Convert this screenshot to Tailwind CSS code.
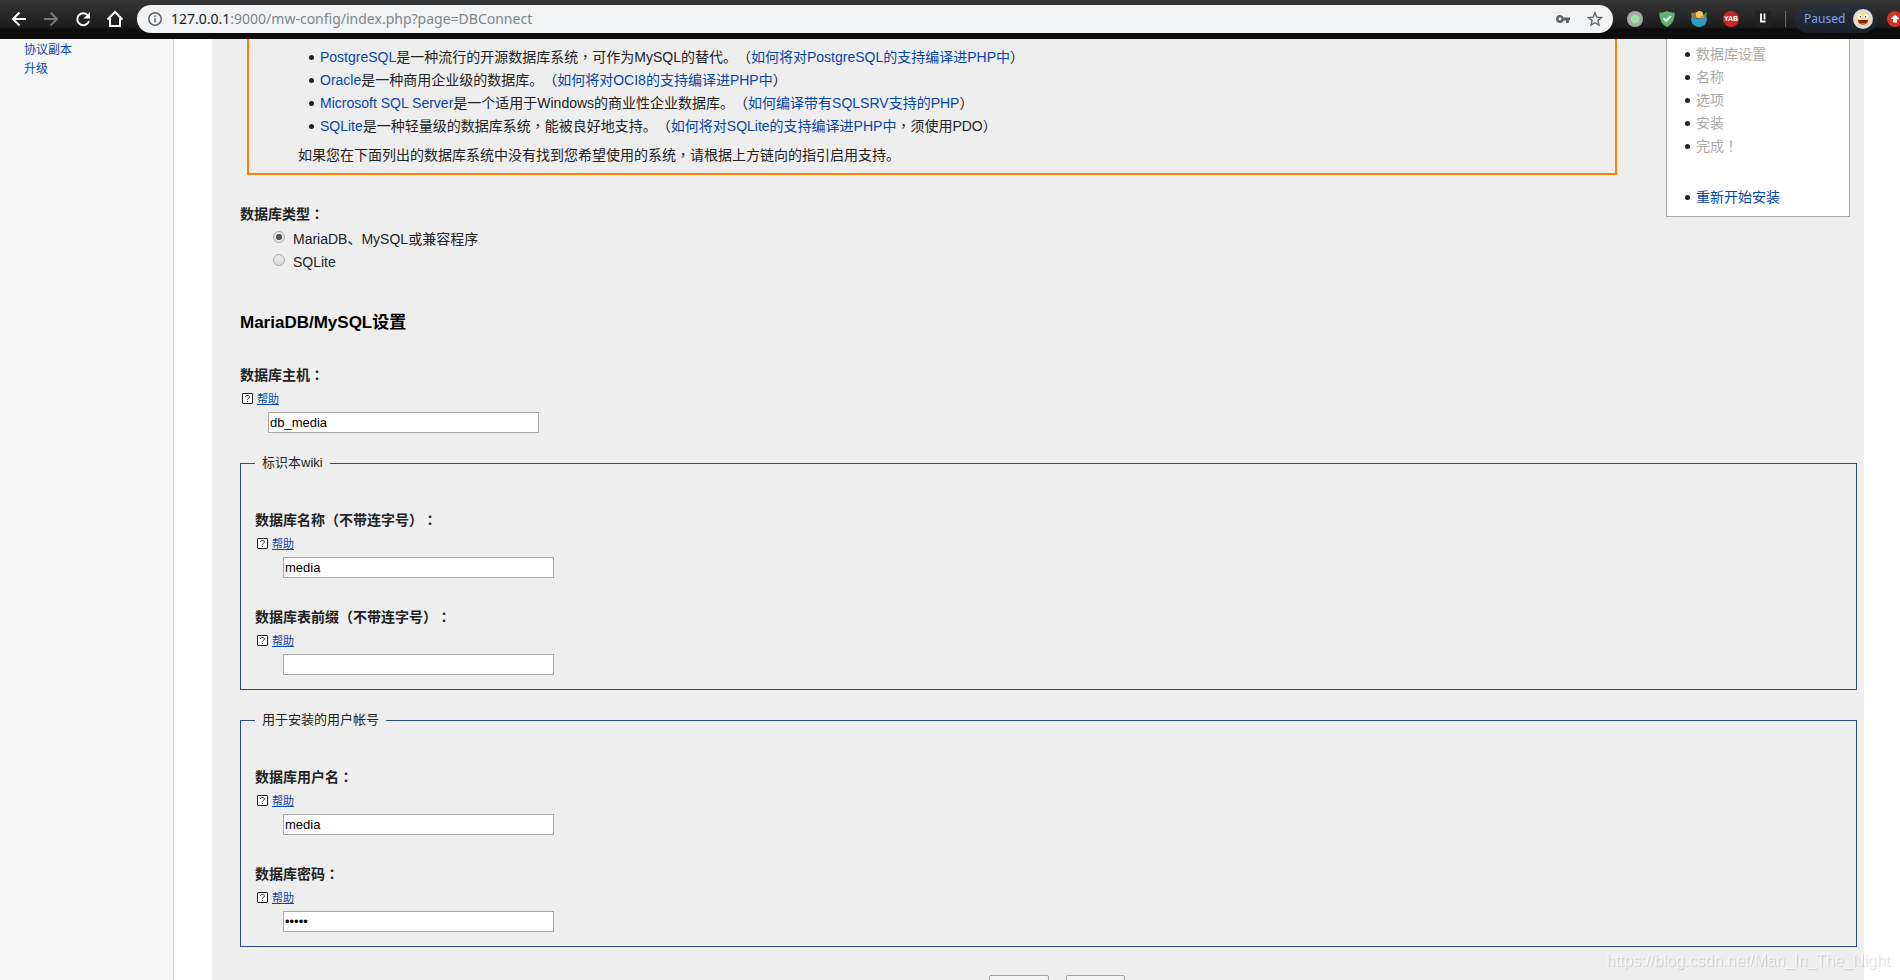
<!DOCTYPE html>
<html lang="zh-CN">
<head>
    <meta charset="UTF-8" />
    <meta name="viewport" content="width=device-width, initial-scale=1.0" />
    <title>MediaWiki 安装</title>
    <script src="https://cdn.jsdelivr.net/npm/@tailwindcss/browser@4"></script>
</head>
<body class="h-screen flex flex-col overflow-hidden bg-white font-['Liberation_Sans','Noto_Sans_CJK_SC',sans-serif] text-sm text-[#222] [text-spacing-trim:space-all]">

    <!-- Browser toolbar -->
    <header class="h-[39px] shrink-0 flex items-center pb-px pl-[9px] bg-linear-to-b from-[#363636] via-[#1c1c1c] via-70% to-[#0c0c0c] to-75% overflow-hidden">
        <nav class="flex items-center gap-3 text-white">
            <button type="button" aria-label="Back" class="size-5">
                <svg viewBox="0 0 20 20" fill="none" stroke="currentColor" stroke-width="2"><path d="M17 10H4M10.500 3.500L4 10l6.500 6.500" /></svg>
            </button>
            <button type="button" aria-label="Forward" class="size-5 text-[#777]">
                <svg viewBox="0 0 20 20" fill="none" stroke="currentColor" stroke-width="2"><path d="M3 10h13M9.500 3.500L16 10l-6.500 6.500" /></svg>
            </button>
            <button type="button" aria-label="Reload" class="size-5">
                <svg viewBox="0 0 20 20" fill="none" stroke="currentColor" stroke-width="2"><path d="M15 6.500A6 6 0 1 0 16 12" /><path d="M17 3v6.500h-6.500z" fill="currentColor" stroke="none" /></svg>
            </button>
            <button type="button" aria-label="Home" class="size-5">
                <svg viewBox="0 0 20 20" fill="none" stroke="currentColor" stroke-width="2"><path d="M2.500 10.500L10 3l7.500 7.500M5 9v8h10V9" /></svg>
            </button>
        </nav>

        <div class="ml-3 flex-1 h-7 flex items-center rounded-full bg-[#f1f3f4] pl-[11px] pr-[10px] text-[#5f6368]">
            <svg class="size-[14px]" viewBox="0 0 14 14" fill="none" stroke="currentColor" stroke-width="1.500"><circle cx="7" cy="7" r="6.200" /><path d="M7 6.200v4M7 3.500v1.600" /></svg>
            <div class="ml-[9px] flex-1 font-['Noto_Sans',sans-serif] text-sm text-[#80868b]"><span class="text-[#202124]">127.0.0.1</span>:9000/mw-config/index.php?page=DBConnect</div>
            <svg class="w-[14px] h-2 mr-[17px]" viewBox="0 0 14 8" fill="currentColor"><path fill-rule="evenodd" d="M4 0a4 4 0 0 1 3.700 2.600H14v2.800h-1.200V8H10V5.400H7.700A4 4 0 1 1 4 0zm0 2.600a1.400 1.400 0 1 0 0 2.800 1.400 1.400 0 0 0 0-2.800z" /></svg>
            <svg class="size-4" viewBox="0 0 16 16" fill="none" stroke="currentColor" stroke-width="1.400"><path d="M8 1.800l1.800 4.300 4.700.4-3.600 3.100 1.100 4.500L8 11.700l-4 2.400 1.100-4.500-3.600-3.100 4.700-.4z" /></svg>
        </div>

        <!-- Extensions -->
        <div class="ml-[14px] flex items-center gap-4">
            <svg class="size-4" viewBox="0 0 16 16"><circle cx="8" cy="8" r="8" fill="#a9a9a9" /><circle cx="8" cy="8" r="4.300" fill="#9be29b" /></svg>
            <svg class="size-4" viewBox="0 0 16 16"><path d="M8 0c2 1.300 5 1.500 7.700 1.500C15.800 9 13 13.500 8 16 3 13.500.2 9 .3 1.500 3 1.500 6 1.300 8 0z" fill="#5cb270" /><path d="M4.500 7.300l2.700 2.600L11.800 5" fill="none" stroke="#fff" stroke-width="1.800" /></svg>
            <svg class="size-4" viewBox="0 0 16 16"><path d="M0 1.500l4 1v5H1z" fill="#3ba55c" /><path d="M16 1l-4 3v4h3z" fill="#2f9e4f" /><path d="M2 2l4-1 1 6-4 .5z" fill="#d94f5c" /><circle cx="8.500" cy="3.700" r="3.700" fill="#f6c244" /><circle cx="8" cy="3.500" r="1" fill="#fbe29a" /><path d="M10 5l3-1 1 4-4-.5z" fill="#f08a2c" /><path d="M0 6.500c5 1.500 11 1.500 16 0 0 6-3 9.500-8 9.500S0 12.500 0 6.500z" fill="#2d9cbc" /></svg>
            <span class="size-4 rounded-full bg-[#c62828] text-white text-[7px] leading-4 font-bold text-center">YAB</span>
            <svg class="size-4" viewBox="0 0 16 16"><path d="M0 0h16v16H0z" fill="#222" /><path d="M6 2.500v8h4.500M9.500 2.500v6" fill="none" stroke="#fff" stroke-width="1.800" /></svg>
        </div>
        <div class="ml-[14px] w-px h-4 bg-[#666]"></div>
        <button type="button" class="ml-2 h-7 w-[83px] shrink-0 flex items-center justify-between rounded-full bg-linear-to-b from-[#2a323e] to-[#1a2029] pl-[10px] pr-1 font-['Noto_Sans',sans-serif] text-xs text-[#7ba4ee]">
            Paused
            <svg class="size-5" viewBox="0 0 20 20"><circle cx="10" cy="10" r="10" fill="#ddd" /><circle cx="10" cy="10" r="7" fill="#fbdc7a" /><circle cx="7" cy="7.500" r="2.400" fill="#fff" /><circle cx="13" cy="7.500" r="2.400" fill="#fff" /><circle cx="7.500" cy="7.800" r=".8" fill="#333" /><circle cx="12.500" cy="7.800" r=".8" fill="#333" /><path d="M5 11h10c0 6-10 6-10 0z" fill="#8b1d1d" /><path d="M7 14h6c-1 2-5 2-6 0z" fill="#ef5350" /></svg>
        </button>
        <div class="ml-[10px] w-[13px] shrink-0 overflow-hidden">
            <svg class="size-4 max-w-none" viewBox="0 0 16 16"><circle cx="8" cy="8" r="8" fill="#d93025" /><path d="M8 3.500l4.500 4.500H10v3.500H6V8H3.500z" fill="#fff" /></svg>
        </div>
    </header>

    <div class="flex-1 min-h-0 flex overflow-hidden">
        <aside class="w-[174px] shrink-0 border-r border-[#a7d7f9] bg-[#f6f6f6] pl-6 pt-[2px]">
            <ul class="text-xs leading-[19px] text-[#0645ad]">
                <li><a href="#">协议副本</a></li>
                <li><a href="#">升级</a></li>
            </ul>
        </aside>

        <main class="ml-[38px] mr-9 flex-1 min-w-0 bg-[#eee] pl-7 pr-[7px]">
            <form>
                <div class="flex items-start">
                    <div class="flex-1">
                        <!-- Supported databases -->
                        <section class="ml-[7px] border-2 border-t-0 border-[#ff7f00] pt-[7px] pb-[7px]">
                            <ul class="pl-[60px] leading-[23px]">
                                <li class="before:inline-block before:size-[5px] before:mr-[6px] before:rounded-full before:bg-[#222] before:align-[2px]"><a href="#" class="text-[#0645ad]">PostgreSQL</a>是一种流行的开源数据库系统<span lang="zh-Hant">，</span>可作为MySQL的替代。（<a href="#" class="text-[#0645ad]">如何将对PostgreSQL的支持编译进PHP中</a>）</li>
                                <li class="before:inline-block before:size-[5px] before:mr-[6px] before:rounded-full before:bg-[#222] before:align-[2px]"><a href="#" class="text-[#0645ad]">Oracle</a>是一种商用企业级的数据库。（<a href="#" class="text-[#0645ad]">如何将对OCI8的支持编译进PHP中</a>）</li>
                                <li class="before:inline-block before:size-[5px] before:mr-[6px] before:rounded-full before:bg-[#222] before:align-[2px]"><a href="#" class="text-[#0645ad]">Microsoft SQL Server</a>是一个适用于Windows的商业性企业数据库。（<a href="#" class="text-[#0645ad]">如何编译带有SQLSRV支持的PHP</a>）</li>
                                <li class="before:inline-block before:size-[5px] before:mr-[6px] before:rounded-full before:bg-[#222] before:align-[2px]"><a href="#" class="text-[#0645ad]">SQLite</a>是一种轻量级的数据库系统<span lang="zh-Hant">，</span>能被良好地支持。（<a href="#" class="text-[#0645ad]">如何将对SQLite的支持编译进PHP中</a><span lang="zh-Hant">，</span>须使用PDO）</li>
                            </ul>
                            <p class="mt-[6px] pl-[49px] leading-[22px]">如果您在下面列出的数据库系统中没有找到您希望使用的系统<span lang="zh-Hant">，</span>请根据上方链向的指引启用支持。</p>
                        </section>

                        <div role="radiogroup" aria-labelledby="dbtype" class="mt-7">
                            <div id="dbtype" class="font-bold leading-[22px]">数据库类型<span lang="zh-Hant">：</span></div>
                            <div class="mt-[3px] ml-[33px] leading-[23px]">
                                <div class="flex gap-2">
                                    <input type="radio" id="mysql" name="DBType" checked class="appearance-none mt-[3px] size-3 rounded-full border border-[#a8a8a8] bg-radial from-[#555] from-40% to-[#e8e8e8] to-50%" />
                                    <label for="mysql">MariaDB、MySQL或兼容程序</label>
                                </div>
                                <div class="flex gap-2">
                                    <input type="radio" id="sqlite" name="DBType" class="appearance-none mt-[3px] size-3 rounded-full border border-[#a8a8a8] bg-linear-to-b from-[#e8e8e8] to-[#dcdcdc]" />
                                    <label for="sqlite">SQLite</label>
                                </div>
                            </div>
                        </div>
                    </div>

                    <!-- Install steps -->
                    <nav class="ml-[49px] mr-[7px] w-[184px] border border-t-0 border-[#aaa] bg-white pt-1 pb-[7px] pl-[18px] leading-[23px]">
                        <ul>
                            <li class="before:inline-block before:size-[5px] before:mr-[6px] before:rounded-full before:bg-[#222] before:align-[2px]"><span class="text-[#aaa]">数据库设置</span></li>
                            <li class="before:inline-block before:size-[5px] before:mr-[6px] before:rounded-full before:bg-[#222] before:align-[2px]"><span class="text-[#aaa]">名称</span></li>
                            <li class="before:inline-block before:size-[5px] before:mr-[6px] before:rounded-full before:bg-[#222] before:align-[2px]"><span class="text-[#aaa]">选项</span></li>
                            <li class="before:inline-block before:size-[5px] before:mr-[6px] before:rounded-full before:bg-[#222] before:align-[2px]"><span class="text-[#aaa]">安装</span></li>
                            <li class="before:inline-block before:size-[5px] before:mr-[6px] before:rounded-full before:bg-[#222] before:align-[2px]"><span class="text-[#aaa]">完成<span lang="zh-Hant">！</span></span></li>
                        </ul>
                        <ul class="mt-7">
                            <li class="before:inline-block before:size-[5px] before:mr-[6px] before:rounded-full before:bg-[#222] before:align-[2px]"><a href="#" class="text-[#0645ad]">重新开始安装</a></li>
                        </ul>
                    </nav>
                </div>

                <h3 class="mt-[37px] text-[17px] leading-6 font-bold text-black">MariaDB/MySQL设置</h3>

                <div class="mt-[29px]">
                    <label for="host" class="block font-bold leading-[22px]">数据库主机<span lang="zh-Hant">：</span></label>
                    <div class="mt-[3px] ml-[2px] h-5 flex items-start gap-1 text-[11px] leading-5">
                        <svg class="size-[11px] mt-1" viewBox="0 0 11 11" fill="none" stroke="#222"><rect x=".5" y=".5" width="10" height="10" rx=".5" fill="#fff" /><path d="M3.500 4c0-2 4-2 4 0 0 1.300-2 1.300-2 2.700M5.500 8v1" /></svg>
                        <a href="#" class="text-[#0645ad] underline">帮助</a>
                    </div>
                    <input type="text" id="host" value="db_media" class="block mt-[3px] ml-7 w-[271px] h-[21px] border border-[#a9a9a9] bg-white px-px text-[13px] text-black" />
                </div>

                <fieldset class="mt-5 border border-[#2a4b8d] px-[14px] pb-[14px]">
                    <legend class="px-[7px] text-[13px] leading-5">标识本wiki</legend>
                    <div class="mt-9">
                        <label for="dbname" class="block font-bold leading-[22px]">数据库名称（不带连字号）<span lang="zh-Hant">：</span></label>
                        <div class="mt-[3px] ml-[2px] h-5 flex items-start gap-1 text-[11px] leading-5">
                            <svg class="size-[11px] mt-1" viewBox="0 0 11 11" fill="none" stroke="#222"><rect x=".5" y=".5" width="10" height="10" rx=".5" fill="#fff" /><path d="M3.500 4c0-2 4-2 4 0 0 1.300-2 1.300-2 2.700M5.500 8v1" /></svg>
                            <a href="#" class="text-[#0645ad] underline">帮助</a>
                        </div>
                        <input type="text" id="dbname" value="media" class="block mt-[3px] ml-7 w-[271px] h-[21px] border border-[#a9a9a9] bg-white px-px text-[13px] text-black" />
                    </div>
                    <div class="mt-7">
                        <label for="prefix" class="block font-bold leading-[22px]">数据库表前缀（不带连字号）<span lang="zh-Hant">：</span></label>
                        <div class="mt-[3px] ml-[2px] h-5 flex items-start gap-1 text-[11px] leading-5">
                            <svg class="size-[11px] mt-1" viewBox="0 0 11 11" fill="none" stroke="#222"><rect x=".5" y=".5" width="10" height="10" rx=".5" fill="#fff" /><path d="M3.500 4c0-2 4-2 4 0 0 1.300-2 1.300-2 2.700M5.500 8v1" /></svg>
                            <a href="#" class="text-[#0645ad] underline">帮助</a>
                        </div>
                        <input type="text" id="prefix" value="" class="block mt-[3px] ml-7 w-[271px] h-[21px] border border-[#a9a9a9] bg-white px-px text-[13px] text-black" />
                    </div>
                </fieldset>

                <fieldset class="mt-5 border border-[#2a4b8d] px-[14px] pb-[14px]">
                    <legend class="px-[7px] text-[13px] leading-5">用于安装的用户帐号</legend>
                    <div class="mt-9">
                        <label for="dbuser" class="block font-bold leading-[22px]">数据库用户名<span lang="zh-Hant">：</span></label>
                        <div class="mt-[3px] ml-[2px] h-5 flex items-start gap-1 text-[11px] leading-5">
                            <svg class="size-[11px] mt-1" viewBox="0 0 11 11" fill="none" stroke="#222"><rect x=".5" y=".5" width="10" height="10" rx=".5" fill="#fff" /><path d="M3.500 4c0-2 4-2 4 0 0 1.300-2 1.300-2 2.700M5.500 8v1" /></svg>
                            <a href="#" class="text-[#0645ad] underline">帮助</a>
                        </div>
                        <input type="text" id="dbuser" value="media" class="block mt-[3px] ml-7 w-[271px] h-[21px] border border-[#a9a9a9] bg-white px-px text-[13px] text-black" />
                    </div>
                    <div class="mt-7">
                        <label for="dbpass" class="block font-bold leading-[22px]">数据库密码<span lang="zh-Hant">：</span></label>
                        <div class="mt-[3px] ml-[2px] h-5 flex items-start gap-1 text-[11px] leading-5">
                            <svg class="size-[11px] mt-1" viewBox="0 0 11 11" fill="none" stroke="#222"><rect x=".5" y=".5" width="10" height="10" rx=".5" fill="#fff" /><path d="M3.500 4c0-2 4-2 4 0 0 1.300-2 1.300-2 2.700M5.500 8v1" /></svg>
                            <a href="#" class="text-[#0645ad] underline">帮助</a>
                        </div>
                        <input type="password" id="dbpass" value="media" class="block mt-[3px] ml-7 w-[271px] h-[21px] border border-[#a9a9a9] bg-white px-px text-[13px] text-black" />
                    </div>
                </fieldset>

                <div class="mt-7 pl-4 flex justify-center gap-[17px] text-[13px] text-black">
                    <button type="button" class="h-6 w-[60px] rounded-xs border border-[#a0a0a0] bg-linear-to-b from-[#f6f6f6] to-[#dedede]">← 返回</button>
                    <button type="submit" class="h-6 w-[59px] rounded-xs border border-[#a0a0a0] bg-linear-to-b from-[#f6f6f6] to-[#dedede]">继续 →</button>
                </div>
            </form>
        </main>
    </div>

    <!-- Watermark -->
    <div class="fixed right-[10px] bottom-[7px] text-base leading-6 text-white/60 [text-shadow:1px_1px_1px_rgba(0,0,0,0.15)]">https://blog.csdn.net/Man_In_The_Night</div>
</body>
</html>
